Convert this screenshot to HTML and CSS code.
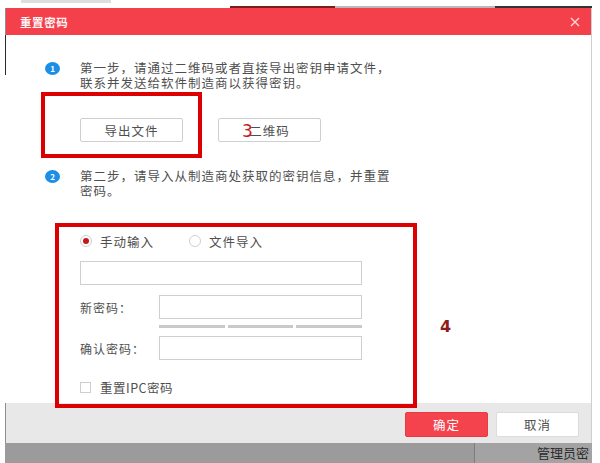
FILE: index.html
```html
<!DOCTYPE html>
<html lang="zh">
<head>
<meta charset="utf-8">
<title>重置密码</title>
<link rel="stylesheet" href="styles.css">
</head>
<body>
<div class="screen">
  <div class="topstrip">
    <div class="tab"></div>
    <div class="line"><div class="line-red"></div><div class="line-dark"></div></div>
  </div>
  <div class="dialog">
    <div class="header">
      <span class="title">重置密码</span>
      <svg class="close" width="10" height="10" viewBox="0 0 10 10"><path d="M1 1L9 9M9 1L1 9" stroke="#ffd6d8" stroke-width="1.4" fill="none"/></svg>
    </div>
    <div class="body">
      <div class="step">
        <span class="num">1</span>
        <p class="step-text">第一步，请通过二维码或者直接导出密钥申请文件，<br>联系并发送给软件制造商以获得密钥。</p>
      </div>
      <div class="btn-row">
        <button class="btn">导出文件</button>
        <button class="btn btn-qr">二维码</button>
      </div>
      <div class="step step2">
        <span class="num">2</span>
        <p class="step-text">第二步，请导入从制造商处获取的密钥信息，并重置<br>密码。</p>
      </div>
      <div class="form">
        <div class="radio-row">
          <label class="radio-item"><span class="radio checked"></span>手动输入</label>
          <label class="radio-item"><span class="radio"></span>文件导入</label>
        </div>
        <div class="input wide"></div>
        <div class="field">
          <span class="label">新密码：</span>
          <div class="input"></div>
        </div>
        <div class="strength">
          <span class="seg"></span><span class="seg"></span><span class="seg"></span>
        </div>
        <div class="field field-confirm">
          <span class="label">确认密码：</span>
          <div class="input"></div>
        </div>
        <label class="check-row"><span class="checkbox"></span>重置IPC密码</label>
      </div>
    </div>
    <div class="footer">
      <button class="fbtn ok">确定</button>
      <button class="fbtn cancel">取消</button>
    </div>
  </div>
  <div class="bottomstrip">
    <div class="bs-left"></div>
    <div class="bs-right">管理员密</div>
  </div>
  <div class="mark mark1"></div>
  <div class="mark mark2"></div>
  <span class="anno anno3">3</span>
  <span class="anno anno4">4</span>
</div>
</body>
</html>
```
FILE: styles.css
```css
* { box-sizing: border-box; }
html, body { margin: 0; padding: 0; background: #fff; }
body {
  font-family: "Noto Sans CJK SC", "Noto Sans", sans-serif;
  color: #4f4f4f;
  width: 600px;
  height: 463px;
  overflow: hidden;
}
.screen { position: relative; width: 600px; height: 463px; }

.topstrip { height: 8px; display: flex; align-items: flex-start; }
.tab { margin-left: 21px; width: 90px; height: 3px; background: #dedede; }
.line { margin-left: 119px; width: 362px; height: 2px; margin-top: 6px; background: #b9b9b9; display: flex; }
.line-red { width: 105px; height: 2px; background: #7e1b1b; }
.line-dark { margin-left: 160px; width: 97px; height: 2px; background: #333; }

.dialog {
  margin-left: 5px;
  width: 587px;
  border-left: 1px solid #8f8f8f;
  border-right: 1px solid #cfcfcf;
  display: flex;
  flex-direction: column;
}
.header {
  height: 27px;
  background: #f4404b;
  display: flex;
  align-items: center;
  justify-content: space-between;
  padding: 0 11px 0 14px;
}
.title { color: #fff3f3; font-size: 11.5px; font-weight: bold; letter-spacing: 0.6px; }
.close { display: block; }

.body {
  height: 368px;
  margin-left: -1px;
  padding: 25px 0 0 40px;
  background: linear-gradient(to right, #2a2a2a 0, #2a2a2a 1px, transparent 1px) no-repeat 0 0 / 1px 40px, #fff;
}

.step { display: flex; align-items: flex-start; }
.num {
  width: 15px; height: 13px; border-radius: 50%;
  background: #1b8fe6; color: #fff;
  font-size: 8px; font-weight: bold; line-height: 13px; text-align: center;
  margin-top: 2px; margin-right: 20px; flex: none;
}
.step-text {
  margin: 0;
  font-size: 12.5px;
  line-height: 15px;
  letter-spacing: 1px;
}
.btn-row { display: flex; gap: 35px; margin: 28px 0 0 35px; }
.btn {
  width: 103px; height: 24px;
  border: 1px solid #cfcfcf; border-radius: 2px;
  background: #fff; color: #4f4f4f;
  font-family: inherit; font-size: 12.5px; letter-spacing: 1px;
  padding: 0;
}
.step2 { margin-top: 26px; }

.form { margin: 36px 0 0 35px; width: 282px; }
.radio-row { display: flex; height: 14px; align-items: center; font-size: 12.5px; letter-spacing: 1px; }
.radio-item { display: flex; align-items: center; }
.radio-item + .radio-item { margin-left: 35px; }
.radio {
  width: 12px; height: 12px; border-radius: 50%;
  border: 1px solid #cfcfcf; margin-right: 8px; background: #fff;
  display: flex; align-items: center; justify-content: center;
}
.radio.checked::after { content: ""; width: 6px; height: 6px; border-radius: 50%; background: #c8161d; }
.input { height: 24px; border: 1px solid #cfcfcf; background: #fff; flex: 1; }
.input.wide { margin-top: 13px; width: 282px; }
.field { display: flex; align-items: center; margin-top: 10px; }
.label { width: 79px; font-size: 12px; letter-spacing: 1px; }
.field-confirm { margin-top: 8px; }
.strength { display: flex; gap: 3px; margin: 6px 0 0 79px; }
.seg { flex: 1; height: 3px; background: #c9c9c9; }
.check-row { display: flex; align-items: center; margin-top: 21px; font-size: 12.5px; letter-spacing: 0.5px; height: 12px; }
.checkbox { width: 11px; height: 11px; border: 1px solid #cfcfcf; background: #fff; margin-right: 9px; }

.footer {
  height: 40px;
  background: #e8e8e8;
  display: flex;
  align-items: center;
  justify-content: flex-end;
  gap: 8px;
  padding: 2px 12px 0 0;
}
.fbtn {
  width: 83px; height: 25px; border-radius: 2px;
  font-family: inherit; font-size: 12.5px; letter-spacing: 1px; padding: 0;
}
.fbtn.ok { background: #f4434d; border: 1px solid #e83a44; color: #fff; }
.fbtn.cancel { background: #fff; border: 1px solid #dcdcdc; color: #4f4f4f; }

.bottomstrip { margin-left: 5px; width: 587px; height: 20px; display: flex; }
.bs-left { width: 470px; background: #9b9b9b; border-right: 1px solid #7c7c7c; }
.bs-right {
  flex: 1; background: #a3a3a3; color: #2b2b2b;
  font-size: 13px; line-height: 20px; padding-left: 62px;
  white-space: nowrap; overflow: hidden; letter-spacing: 0;
}

.mark { position: absolute; border: 4px solid #dc0000; }
.mark1 { left: 41px; top: 92px; width: 161px; height: 66px; }
.mark2 { left: 55px; top: 223px; width: 362px; height: 185px; }
.anno { position: absolute; font-family: "DejaVu Sans", sans-serif; line-height: 1; }
.anno3 { left: 242px; top: 123px; font-size: 17px; color: #c41a1a; }
.anno4 { left: 440px; top: 319px; font-size: 16px; font-weight: bold; color: #8e1b1b; }
```
